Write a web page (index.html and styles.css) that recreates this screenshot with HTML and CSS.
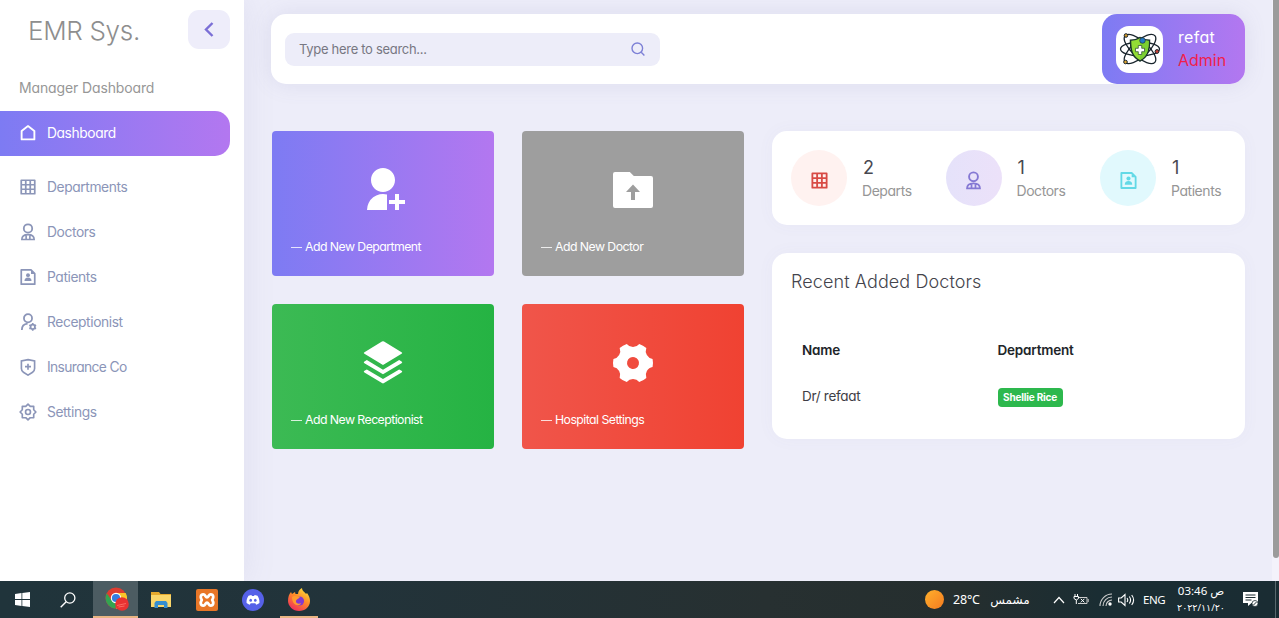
FILE: index.html
```html
<!DOCTYPE html>
<html lang="en">
<head>
<meta charset="utf-8">
<title>EMR Sys.</title>
<link rel="stylesheet" href="styles.css">
</head>
<body>
<svg class="defs" width="0" height="0">
  <defs>
    <symbol id="i-home" viewBox="0 0 24 24"><path d="M3.500 20.500V9.200L12 2.800l8.500 6.400v11.300z" fill="none" stroke="currentColor" stroke-width="2.500" stroke-linejoin="round"/></symbol>
    <symbol id="i-grid" viewBox="0 0 24 24"><path d="M3 3h18v18H3zM3 9h18M3 15h18M9 3v18M15 3v18" fill="none" stroke="currentColor" stroke-width="2.300" stroke-linejoin="round"/></symbol>
    <symbol id="i-doctor" viewBox="0 0 24 24"><circle cx="12" cy="7.300" r="5.600" fill="none" stroke="currentColor" stroke-width="2.400"/><path d="M3.800 22c0-4 3-6.500 8.200-6.500s8.200 2.500 8.200 6.500zM9.500 16v6M14.500 16v6" fill="none" stroke="currentColor" stroke-width="2.200"/></symbol>
    <symbol id="i-patient" viewBox="0 0 24 24"><path d="M3 2.500h13l5 5v14H3z" fill="none" stroke="currentColor" stroke-width="2.300" stroke-linejoin="round"/><path d="M16 3v5h5" fill="currentColor"/><circle cx="12" cy="9.500" r="2.600" fill="currentColor"/><path d="M7.300 17.300a4.700 4.700 0 0 1 9.400 0z" fill="currentColor"/></symbol>
    <symbol id="i-reception" viewBox="0 0 24 24"><circle cx="12" cy="7" r="5.400" fill="none" stroke="currentColor" stroke-width="2.400"/><path d="M3.800 22.500c0-4.800 3-8 7.700-8.400" fill="none" stroke="currentColor" stroke-width="2.400"/><circle cx="18.300" cy="18.500" r="2.900" fill="none" stroke="currentColor" stroke-width="2.300"/><path d="M18.300 13.300v2M18.300 21.700v2M13.800 15.900l1.700 1M21 20.100l1.700 1M13.800 21.100l1.700-1M21 16.900l1.700-1" stroke="currentColor" stroke-width="2.200"/></symbol>
    <symbol id="i-shield" viewBox="0 0 24 24"><path d="M12 2.100l8.800 1.900v10c0 2.500-1 3.900-2.700 5L12 22.800 5.900 19c-1.700-1.100-2.700-2.500-2.700-5V4zM12 7.500v8M8 11.500h8" fill="none" stroke="currentColor" stroke-width="2.200"/></symbol>
    <symbol id="i-gear" viewBox="0 0 24 24"><path d="M12 1.500l3 2.900h4.600V9l2.900 3-2.900 3v4.600H15l-3 2.900-3-2.900H4.400V15l-2.900-3 2.900-3V4.400H9z" fill="none" stroke="currentColor" stroke-width="2.200" stroke-linejoin="round"/><circle cx="12" cy="12" r="3.300" fill="none" stroke="currentColor" stroke-width="2.200"/></symbol>
  </defs>
</svg>

<div class="screen">
  <div class="app">
    <aside class="sidebar">
      <div class="brand">
        <h1 class="brand-name">EMR Sys.</h1>
        <button class="collapse"><svg width="10" height="15" viewBox="0 0 10 15"><path d="M8.500 1L2 7.500 8.500 14" fill="none" stroke="currentColor" stroke-width="2.400"/></svg></button>
      </div>
      <p class="side-title">Manager Dashboard</p>
      <nav class="nav">
        <a class="nav-item active"><svg class="ico"><use href="#i-home"/></svg><span>Dashboard</span></a>
        <a class="nav-item"><svg class="ico"><use href="#i-grid"/></svg><span>Departments</span></a>
        <a class="nav-item"><svg class="ico"><use href="#i-doctor"/></svg><span>Doctors</span></a>
        <a class="nav-item"><svg class="ico"><use href="#i-patient"/></svg><span>Patients</span></a>
        <a class="nav-item"><svg class="ico"><use href="#i-reception"/></svg><span>Receptionist</span></a>
        <a class="nav-item"><svg class="ico"><use href="#i-shield"/></svg><span class="tight">Insurance Co</span></a>
        <a class="nav-item"><svg class="ico"><use href="#i-gear"/></svg><span>Settings</span></a>
      </nav>
    </aside>

    <main class="main">
      <header class="topbar">
        <div class="search">
          <span class="placeholder">Type here to search...</span>
          <svg class="search-ico" width="14" height="14" viewBox="0 0 14 14"><circle cx="6.300" cy="6.300" r="5.300" fill="none" stroke="currentColor" stroke-width="1.400"/><path d="M10.200 10.200l3.200 3.200" stroke="currentColor" stroke-width="1.400"/></svg>
        </div>
        <div class="user">
          <div class="avatar">
            <svg width="42" height="36" viewBox="0 0 42 36">
              <g fill="#fff" stroke="#18242c" stroke-width="1.300">
                <ellipse cx="21" cy="18" rx="19.500" ry="7"/>
                <ellipse cx="21" cy="18" rx="20" ry="8" transform="rotate(42 21 18)" fill="none"/>
                <ellipse cx="21" cy="18" rx="20" ry="8" transform="rotate(-42 21 18)" fill="none"/>
              </g>
              <path d="M21 6.500c3 2 6 2.800 9.500 2.800 0 10-1.500 16.500-9.500 20.700-8-4.200-9.500-10.700-9.500-20.700 3.500 0 6.500-.8 9.500-2.800z" fill="#92dc35" stroke="#18342a" stroke-width="1.500"/>
              <path d="M21 7.500c3 2 6 2.500 8.700 2.600 0 9-1.300 15-8.700 19z" fill="#7bcf30"/>
              <path d="M19.300 14.500h3.400v2.800h2.800v3.400h-2.800v2.800h-3.400v-2.800h-2.800v-3.400h2.800z" fill="#fff" stroke="#24452a" stroke-width=".7"/>
              <circle cx="23.500" cy="9.500" r="2.800" fill="#2379c4" stroke="#18242c" stroke-width=".6"/>
              <circle cx="7" cy="4.500" r="1.800" fill="#d69b28" stroke="#18242c"/>
              <circle cx="6.500" cy="31" r="1.800" fill="#e0a52c" stroke="#18242c"/>
              <circle cx="38" cy="20.500" r="1.900" fill="#c94137" stroke="#18242c"/>
            </svg>
          </div>
          <div class="who"><span class="who-name">refat</span><span class="who-role">Admin</span></div>
        </div>
      </header>

      <div class="content">
        <section class="tiles">
          <a class="tile purple"><svg class="tile-ico" viewBox="0 0 24 24"><path d="M14 14.252V22H4a8 8 0 0 1 10-7.748zM12 13c-3.315 0-6-2.685-6-6s2.685-6 6-6 6 2.685 6 6-2.685 6-6 6zm6 4v-3h2v3h3v2h-3v3h-2v-3h-3v-2h3z"/></svg><span class="tile-text"><i class="dash"></i>Add New Department</span></a>
          <a class="tile gray"><svg class="tile-ico" viewBox="0 0 24 24"><path d="M12.414 5H21a1 1 0 0 1 1 1v14a1 1 0 0 1-1 1H3a1 1 0 0 1-1-1V4a1 1 0 0 1 1-1h7.414l2 2zM13 13h2.500L12 9.300 8.500 13H11v4h2v-4z" fill-rule="evenodd"/></svg><span class="tile-text"><i class="dash"></i>Add New Doctor</span></a>
          <a class="tile green"><svg class="tile-ico" viewBox="0 0 24 24"><path d="M20.083 10.500l1.202.721a.5.500 0 0 1 0 .858L12 17.650l-9.285-5.571a.5.500 0 0 1 0-.858l1.202-.721L12 15.350l8.083-4.850zm0 4.700l1.202.721a.5.500 0 0 1 0 .858l-8.770 5.262a1 1 0 0 1-1.030 0l-8.770-5.262a.5.500 0 0 1 0-.858l1.202-.721L12 20.050l8.083-4.850zM12.514 1.309l8.771 5.262a.5.500 0 0 1 0 .858L12 13 2.715 7.429a.5.500 0 0 1 0-.858l8.770-5.262a1 1 0 0 1 1.030 0z"/></svg><span class="tile-text"><i class="dash"></i>Add New Receptionist</span></a>
          <a class="tile red"><svg class="tile-ico" viewBox="0 0 24 24"><path fill-rule="evenodd" d="M5.334 4.545a9.990 9.990 0 0 1 3.542-2.048A3.993 3.993 0 0 0 12 3.999a3.993 3.993 0 0 0 3.124-1.502 9.990 9.990 0 0 1 3.542 2.048 3.993 3.993 0 0 0 .262 3.454 3.993 3.993 0 0 0 2.863 1.955 10.043 10.043 0 0 1 0 4.090c-1.160.178-2.230.860-2.863 1.955a3.993 3.993 0 0 0-.262 3.455 9.990 9.990 0 0 1-3.542 2.047A3.993 3.993 0 0 0 12 20a3.993 3.993 0 0 0-3.124 1.502 9.990 9.990 0 0 1-3.542-2.047 3.993 3.993 0 0 0-.262-3.455 3.993 3.993 0 0 0-2.863-1.954 10.043 10.043 0 0 1 0-4.091 3.993 3.993 0 0 0 2.863-1.955 3.993 3.993 0 0 0 .262-3.454zM13.500 14.597a3 3 0 1 0-3-5.196 3 3 0 0 0 3 5.196z"/></svg><span class="tile-text"><i class="dash"></i>Hospital Settings</span></a>
        </section>

        <section class="side">
          <div class="card stats">
            <div class="stat"><span class="disc coral"><svg class="ico"><use href="#i-grid"/></svg></span><span class="stat-text"><b class="num">2</b><span>Departs</span></span></div>
            <div class="stat"><span class="disc violet"><svg class="ico"><use href="#i-doctor"/></svg></span><span class="stat-text"><b class="num">1</b><span>Doctors</span></span></div>
            <div class="stat"><span class="disc cyan"><svg class="ico"><use href="#i-patient"/></svg></span><span class="stat-text"><b class="num">1</b><span>Patients</span></span></div>
          </div>
          <div class="card recent">
            <h2 class="recent-title">Recent Added Doctors</h2>
            <div class="table">
              <span class="th">Name</span><span class="th">Department</span>
              <span class="td">Dr/ refaat</span><span class="td"><span class="badge">Shellie Rice</span></span>
            </div>
          </div>
        </section>
      </div>
    </main>
    <div class="scroll"><div class="thumb"></div></div>
  </div>

  <footer class="taskbar">
    <div class="tb-apps">
      <span class="tb-cell win"><svg width="15" height="15" viewBox="0 0 15 15"><path d="M0 2l6.500-.9v6H0zM7.300 1L15 0v7.100H7.300zM0 7.900h6.500v6L0 13zM7.300 7.900H15V15l-7.700-1z" fill="#fff"/></svg></span>
      <span class="tb-cell find"><svg width="16" height="16" viewBox="0 0 16 16"><circle cx="9.800" cy="6" r="5.100" fill="none" stroke="#fff" stroke-width="1.300"/><path d="M6.200 9.700L.7 15.200" stroke="#fff" stroke-width="1.400"/></svg></span>
      <span class="tb-cell on"><svg width="24" height="24" viewBox="0 0 24 24"><circle cx="11" cy="11" r="10.500" fill="#de3c30"/><path d="M1.800 6.200A10.500 10.500 0 0 0 10 21.500l4.600-8L6.300 13z" fill="#33a451"/><path d="M11 6h9.700A10.500 10.500 0 0 1 11 21.500l4.500-8z" fill="#fbc529"/><circle cx="11" cy="11" r="5.200" fill="#fff"/><circle cx="11" cy="11" r="4.100" fill="#347de0"/><circle cx="17" cy="17" r="6.800" fill="#e93232"/><path d="M12 18.500l9-2M13.500 20l6-1" stroke="#fa6a60" stroke-width="1"/></svg></span>
      <span class="tb-cell"><svg width="20" height="18" viewBox="0 0 20 18"><path d="M0 1h8l1.500 2H20v4H0z" fill="#e5a92d"/><path d="M0 4h20v12H0z" fill="#fad66a"/><path d="M3.500 17v-5l1.500-2h10l1.500 2v5H13v-3H7v3z" fill="#358ed0"/></svg></span>
      <span class="tb-cell"><svg width="22" height="22" viewBox="0 0 22 22"><rect width="22" height="22" rx="2" fill="#e87627"/><path d="M7.300 5.300C4.500 5.300 4 8.500 5.800 11 4 13.500 4.500 16.700 7.300 16.700c2.200 0 2-3 3.700-3s1.500 3 3.700 3c2.800 0 3.300-3.200 1.500-5.700 1.800-2.500 1.300-5.700-1.500-5.700-2.200 0-2 3-3.700 3s-1.500-3-3.700-3z" fill="none" stroke="#fff" stroke-width="2.800" stroke-linejoin="round"/></svg></span>
      <span class="tb-cell"><svg width="22" height="22" viewBox="0 0 22 22"><circle cx="11" cy="11" r="11" fill="#5661e8"/><path d="M6.500 6.700l2.800-.8.700 1.200h2l.7-1.200 2.800.8c1.500 2.300 2.200 4.900 1.900 7.300-1 .9-2 1.400-3.200 1.700l-.9-1.500H8.700l-.9 1.500c-1.200-.3-2.200-.8-3.200-1.700-.3-2.400.4-5 1.900-7.300z" fill="#fff"/><ellipse cx="8.700" cy="11.200" rx="1.300" ry="1.500" fill="#5661e8"/><ellipse cx="13.300" cy="11.200" rx="1.300" ry="1.500" fill="#5661e8"/></svg></span>
      <span class="tb-cell open"><svg width="22" height="23" viewBox="0 0 22 23"><defs><linearGradient id="fx" x1=".8" y1="0" x2=".2" y2="1"><stop offset="0" stop-color="#ffe23c"/><stop offset=".45" stop-color="#ff8a28"/><stop offset="1" stop-color="#ee2760"/></linearGradient></defs><path d="M3 4l1 2 3-2 .5 2L10 6c0-3 2-5 4-6 0 3 3 4 4 6l1-1c2 3 3 5 3 8 0 6-5 10-11 10S0 18 0 13c0-4 1-7 3-9z" fill="url(#fx)"/><circle cx="11.500" cy="13" r="4.600" fill="#8239d0"/><path d="M4 9c3-2 5 0 8-.5-1 3-4 2-4 5 0 2 3 3 5 1.500-1 4-9 3-9-6z" fill="#ff9b2d"/></svg></span>
    </div>
    <div class="tb-tray">
      <span class="sun"></span>
      <span class="temp">28°C</span>
      <span class="sky" lang="ar">مشمس</span>
      <svg class="up" width="12" height="8" viewBox="0 0 12 8"><path d="M1 7l5-5.500L11 7" fill="none" stroke="#fff" stroke-width="1.200"/></svg>
      <svg class="batt" width="16" height="12" viewBox="0 0 16 12"><path d="M5 3.500h9v6H5M15.200 5v3" fill="none" stroke="#ccc"/><path d="M2 0v2.500M4.500 0v2.500M1 2.500h4.500v2L3.300 6 1 4.500zM3.300 6v4M7.800 4.800l3.600 3.600M11.400 4.800L7.800 8.400" fill="none" stroke="#fff"/></svg>
      <svg class="wifi" width="13" height="13" viewBox="0 0 13 13"><path d="M1 13A12 12 0 0 1 13 1M4 13a9 9 0 0 1 9-9M7 13a6 6 0 0 1 6-6" fill="none" stroke="#ccc" stroke-width="1.100"/><circle cx="11" cy="11" r="1.700" fill="#fff"/></svg>
      <svg class="vol" width="17" height="14" viewBox="0 0 17 14"><path d="M.6 5h2.600L7 1.500v11L3.200 9H.6zM9 5q1.500 2 0 4M11.300 3.500q2.600 3.500 0 7M13.700 2q3.800 5 0 10" fill="none" stroke="#fff" stroke-width="1.100"/></svg>
      <span class="lang">ENG</span>
      <span class="clock"><span class="time">03:46 ص</span><span class="date">٢٠٢٢/١١/٢٠</span></span>
      <svg class="note" width="17" height="17" viewBox="0 0 17 17"><path d="M1 1h15v11H9.500L6 15v-3H1z" fill="#fff"/><path d="M3.500 4h10M3.500 6.500h10M3.500 9h6" stroke="#1d2d32" stroke-width="1.100"/><circle cx="13" cy="12.500" r="3" fill="#fff" stroke="#1d2d32" stroke-width=".8"/><path d="M11.500 14l3-3" stroke="#1d2d32"/></svg>
      <span class="peek"></span>
    </div>
  </footer>
</div>
</body>
</html>
```

FILE: styles.css
```css
* { box-sizing: border-box; }
body {
  margin: 0;
  font-family: Inter, Lato, sans-serif;
  font-feature-settings: "cv11";
  font-size: 14px;
  overflow: hidden;
}
.defs { position: absolute; }
svg { display: block; flex: none; }
.screen { width: 1279px; height: 618px; display: flex; flex-direction: column; }
.app { height: 581px; display: flex; background: #ededf9; }

.sidebar { width: 244px; flex: none; background: #fff; box-shadow: 0 0 30px rgba(130, 130, 180, .13); }
.brand { display: flex; justify-content: space-between; padding: 10px 14px 0 28px; height: 76px; }
.brand-name { margin: 1px 0 0; font-size: 26px; line-height: 40px; font-weight: 300; color: #8e8e8e; letter-spacing: -.3px; }
.collapse { width: 42px; height: 39px; border: 0; border-radius: 11px; background: #eeedfa; color: #7b6fd6; display: flex; align-items: center; justify-content: center; padding: 0; }
.side-title { margin: 0 0 0 19px; height: 35px; line-height: 24px; color: #979797; letter-spacing: -.13px; }
.nav { display: flex; flex-direction: column; }
.nav-item { height: 45px; display: flex; align-items: center; gap: 10px; padding: 0 0 1px 19px; color: #8b95b8; font-size: 13.800px; letter-spacing: -.4px; }
.nav-item.active { width: 230px; margin-bottom: 9px; color: #fff; background: linear-gradient(90deg, #7d7bf3, #b377f0); border-radius: 0 15px 15px 0; }
.tight { letter-spacing: -.62px; }
.ico { width: 18px; height: 18px; }

.main { flex: 1; min-width: 0; padding: 14px 27px 0 27px; }
.topbar { height: 70px; border-radius: 15px; background: #fff; display: flex; justify-content: space-between; align-items: center; padding-left: 14px; box-shadow: 0 0 22px rgba(110, 110, 160, .13); }
.search { width: 375px; height: 33px; border-radius: 9px; background: #ededf9; display: flex; align-items: center; justify-content: space-between; padding: 0 15px 1px 14px; color: #777782; }
.placeholder { font-size: 13px; letter-spacing: -.3px; }
.search-ico { color: #7d80d6; }
.user { width: 143px; height: 70px; border-radius: 15px; background: linear-gradient(90deg, #7d7bf3, #b377f0); display: flex; align-items: center; padding-left: 14px; gap: 15px; }
.avatar { width: 47px; height: 47px; border-radius: 13px; background: #fff; display: flex; align-items: center; justify-content: center; }
.who { display: flex; flex-direction: column; font-size: 16px; line-height: 23px; margin-top: -1px; }
.who-name { color: #fff; letter-spacing: .3px; }
.who-role { color: #f01f4b; }

.content { margin: 47px 0 0 1px; display: flex; gap: 28px; }
.tiles { display: grid; grid-template-columns: 222px 222px; grid-template-rows: 145px 145px; gap: 28px; }
.tile { border-radius: 4px; color: #fff; display: flex; flex-direction: column; align-items: center; padding: 35px 19px 0; }
.tile-ico { width: 48px; height: 48px; fill: currentColor; }
.tile-text { align-self: flex-start; margin-top: 23px; line-height: 20px; font-size: 12.300px; letter-spacing: -.55px; white-space: nowrap; display: flex; align-items: center; gap: 3px; }
.dash { width: 11px; height: 1px; background: rgba(255, 255, 255, .8); margin-top: 1px; }
.purple { background: linear-gradient(90deg, #7d7bf3, #b377f0); }
.gray { background: #9e9e9e; }
.green { background: linear-gradient(90deg, #3cba54, #25b343); }
.red { background: linear-gradient(90deg, #f0554a, #f04232); }

.side { width: 473px; display: flex; flex-direction: column; gap: 28px; }
.card { background: #fff; border-radius: 15px; box-shadow: 0 0 18px rgba(110, 110, 160, .04); }
.stats { height: 94px; display: grid; grid-template-columns: 154.500px 154.500px 1fr; padding: 19px 0 0 19px; }
.stat { display: flex; gap: 15px; }
.disc { width: 56px; height: 56px; border-radius: 50%; display: flex; align-items: center; justify-content: center; padding-top: 5px; }
.disc .ico { width: 19px; height: 19px; }
.coral { background: #fff2f0; color: #d84b45; }
.violet { background: linear-gradient(90deg, #e5e2fa, #ece1f9); color: #8578d4; }
.cyan { background: #e1f9fd; color: #62d9e6; }
.stat-text { display: flex; flex-direction: column; color: #969696; letter-spacing: -.45px; line-height: 20px; }
.num { font-size: 18px; font-weight: 400; color: #484850; line-height: 24px; padding: 6px 0 0 1px; height: 31px; }
.recent { height: 186px; padding: 16px 19px 0; }
.recent-title { margin: 0; font-size: 18px; line-height: 25px; font-weight: 300; color: #44444c; letter-spacing: .1px; }
.table { display: grid; grid-template-columns: 195.500px 1fr; grid-template-rows: 46px 46px; align-items: center; margin: 33px 0 0 11px; color: #3e3e45; }
.th { font-weight: 600; font-size: 13.500px; color: #212529; letter-spacing: -.2px; }
.td { font-size: 13.500px; letter-spacing: -.3px; }
.badge { display: block; width: 65px; height: 19px; margin-top: 3px; border-radius: 4px; background: #2db84d; color: #fff; font-size: 10px; font-weight: 700; line-height: 18px; text-align: center; letter-spacing: -.2px; }
.scroll { width: 7px; padding-left: 1px; background: #f3f2fb; }
.thumb { height: 558px; background: #9b9b9b; border-radius: 0 0 3px 3px; }

.taskbar { height: 37px; background: linear-gradient(90deg, #20343b 0%, #22333a 28%, #273031 60%, #252e2e 75%, #1a2d33 86%, #1a2c33 100%); display: flex; justify-content: space-between; color: #fff; font-family: "Noto Sans", "DejaVu Sans", sans-serif; font-size: 12px; }
.tb-apps { display: flex; }
.tb-cell { width: 46px; height: 37px; display: flex; align-items: center; justify-content: center; }
.win { width: 45px; }
.find { width: 48px; padding-right: 2px; }
.on { width: 45px; background: #4c5c62; border-bottom: 2px solid #e9b583; padding: 1px 0 0 2px; }
.open { width: 38px; margin-left: 4px; border-bottom: 2px solid #e9b583; padding-top: 2px; }
.tb-tray { display: flex; align-items: center; white-space: nowrap; }
.sun { width: 19px; height: 19px; border-radius: 50%; background: linear-gradient(135deg, #ffb02c, #f47b20); }
.temp { margin-left: 9px; width: 36px; font-size: 12.500px; letter-spacing: -.2px; }
.sky { width: 42px; font-family: "DejaVu Sans", sans-serif; font-size: 12px; text-align: center; }
.up { margin-left: 22px; }
.batt { margin-left: 8px; }
.wifi { margin-left: 10px; }
.vol { margin-left: 6px; }
.lang { margin-left: 8px; width: 34px; font-size: 11.500px; letter-spacing: -.4px; }
.clock { width: 48px; display: flex; flex-direction: column; align-items: center; line-height: 17px; font-size: 11.500px; letter-spacing: -.4px; font-family: "Noto Sans", "DejaVu Sans", sans-serif; }
.time { font-size: 11.500px; letter-spacing: -.6px; margin-top: -2px; }
.date { font-size: 9.500px; letter-spacing: -.2px; }
.note { margin-left: 17px; }
.peek { width: 1px; height: 37px; background: #59686d; margin: 0 3px 0 16px; }
```
